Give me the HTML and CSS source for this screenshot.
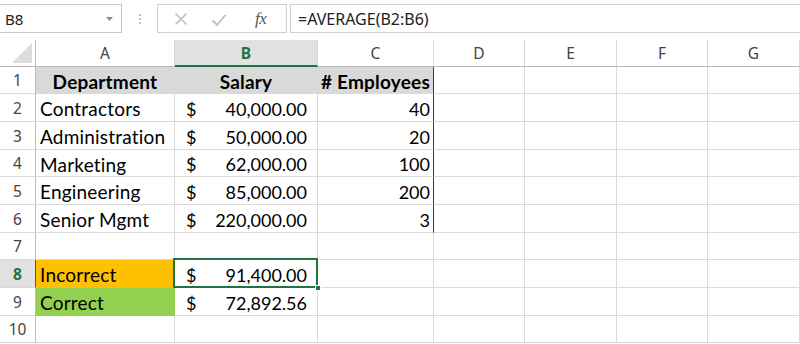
FILE: index.html
```html
<!DOCTYPE html>
<html>
<head>
<meta charset="utf-8">
<link rel="stylesheet" href="styles.css">
</head>
<body>
<div class="fbar">
  <div class="namebox"><span>B8</span><svg class="dd" width="7" height="4" viewBox="0 0 7 4"><path d="M0 0H7L3.5 4Z" fill="#8a8a8a"/></svg></div>
  <div class="grip"><i></i><i></i><i></i></div>
  <div class="btns">
    <svg class="ic" width="14" height="14" viewBox="0 0 14 14"><path d="M1.5 1.5L12.5 12.5M12.5 1.5L1.5 12.5" stroke="#bdbdbd" stroke-width="1.6" fill="none"/></svg>
    <svg class="ic" width="16" height="14" viewBox="0 0 16 14"><path d="M1.5 7.5L6 12L14.5 2" stroke="#bdbdbd" stroke-width="1.8" fill="none"/></svg>
    <span class="fx">fx</span>
  </div>
  <div class="formula">=AVERAGE(B2:B6)</div>
</div>
<div class="sheet">
  <div class="row r27 hdr">
    <div class="c rh corner"><svg width="20" height="20" viewBox="0 0 20 20"><path d="M20 0V20H0Z" fill="#dcdcdc"/></svg></div>
    <div class="c ch">A</div>
    <div class="c ch sel">B</div>
    <div class="c ch">C</div>
    <div class="c ch">D</div>
    <div class="c ch">E</div>
    <div class="c ch">F</div>
    <div class="c ch">G</div>
  </div>
  <div class="row r27">
    <div class="c rh">1</div>
    <div class="c gray b ctr t">Department</div>
    <div class="c gray b ctr t">Salary</div>
    <div class="c gray b ctr edge t">#&nbsp;Employees</div>
    <div class="c"></div><div class="c"></div><div class="c"></div><div class="c"></div>
  </div>
  <div class="row r28">
    <div class="c rh">2</div>
    <div class="c l t">Contractors</div>
    <div class="c acc"><span>$</span><span>40,000.00</span></div>
    <div class="c r edge">40</div>
    <div class="c"></div><div class="c"></div><div class="c"></div><div class="c"></div>
  </div>
  <div class="row r28">
    <div class="c rh">3</div>
    <div class="c l t">Administration</div>
    <div class="c acc"><span>$</span><span>50,000.00</span></div>
    <div class="c r edge">20</div>
    <div class="c"></div><div class="c"></div><div class="c"></div><div class="c"></div>
  </div>
  <div class="row r27">
    <div class="c rh">4</div>
    <div class="c l t">Marketing</div>
    <div class="c acc"><span>$</span><span>62,000.00</span></div>
    <div class="c r edge">100</div>
    <div class="c"></div><div class="c"></div><div class="c"></div><div class="c"></div>
  </div>
  <div class="row r28">
    <div class="c rh">5</div>
    <div class="c l t">Engineering</div>
    <div class="c acc"><span>$</span><span>85,000.00</span></div>
    <div class="c r edge">200</div>
    <div class="c"></div><div class="c"></div><div class="c"></div><div class="c"></div>
  </div>
  <div class="row r28">
    <div class="c rh">6</div>
    <div class="c l t">Senior Mgmt</div>
    <div class="c acc"><span>$</span><span>220,000.00</span></div>
    <div class="c r edge">3</div>
    <div class="c"></div><div class="c"></div><div class="c"></div><div class="c"></div>
  </div>
  <div class="row r27">
    <div class="c rh">7</div>
    <div class="c"></div><div class="c"></div><div class="c"></div>
    <div class="c"></div><div class="c"></div><div class="c"></div><div class="c"></div>
  </div>
  <div class="row r28">
    <div class="c rh rsel">8</div>
    <div class="c l t orange">Incorrect</div>
    <div class="c acc active"><span>$</span><span>91,400.00</span><i class="handle"></i></div>
    <div class="c"></div>
    <div class="c"></div><div class="c"></div><div class="c"></div><div class="c"></div>
  </div>
  <div class="row r28">
    <div class="c rh">9</div>
    <div class="c l t green">Correct</div>
    <div class="c acc"><span>$</span><span>72,892.56</span></div>
    <div class="c"></div>
    <div class="c"></div><div class="c"></div><div class="c"></div><div class="c"></div>
  </div>
  <div class="row r27">
    <div class="c rh">10</div>
    <div class="c"></div><div class="c"></div><div class="c"></div>
    <div class="c"></div><div class="c"></div><div class="c"></div><div class="c"></div>
  </div>
</div>
</body>
</html>
```
FILE: styles.css
```css
* { box-sizing: border-box; }
html, body { margin: 0; padding: 0; background: #fff; }
body { width: 800px; height: 344px; overflow: hidden; font-family: "Lato", "Liberation Sans", sans-serif; color: #000; }

.fbar { height: 40px; display: flex; align-items: flex-start; padding-top: 4px; font-family: "Noto Sans", "Open Sans", sans-serif; }
.namebox { width: 122px; height: 29px; border: 1px solid #c6c6c6; border-left: none; display: flex; align-items: center; justify-content: space-between; padding: 0 8px 0 5px; font-size: 15px; color: #222; }
.namebox .dd { margin-top: 1px; }
.grip { width: 35px; height: 29px; display: flex; flex-direction: column; align-items: center; justify-content: center; gap: 2px; }
.grip i { width: 2px; height: 2px; background: #c4c4c4; display: block; }
.btns { width: 130px; height: 29px; border: 1px solid #d0d0d0; display: flex; align-items: center; padding-left: 16px; }
.btns .ic:nth-child(2) { margin-left: 23px; margin-top: 2px; }
.fx { margin-left: 28px; font-family: "Liberation Serif", serif; font-style: italic; font-size: 17px; color: #555; letter-spacing: -0.5px; }
.formula { flex: 1; height: 29px; margin-left: 3px; border: 1px solid #d0d0d0; border-right: none; font-size: 16px; color: #222; display: flex; align-items: center; padding-left: 7px; }

.sheet { display: flex; flex-direction: column; }
.row { display: grid; grid-template-columns: 36px 139px 143px 116px 91px 92px 91px 92px; }
.r27 { height: 27px; }
.r28 { height: 28px; }
.c { border-right: 1px solid #dadada; border-bottom: 1px solid #dadada; font-size: 18px; display: flex; align-items: center; white-space: nowrap; padding-top: 2px; }
.c.t { font-size: 19px; letter-spacing: 0.2px; }
.hdr .c { border-bottom-color: #b7b7b7; }
.ch { justify-content: center; font-family: "Noto Sans", "Open Sans", sans-serif; font-size: 15.5px; color: #444; border-right-color: #d8d8d8; padding-top: 0; }
.ch.sel { background: #e1e1e1; color: #217346; font-weight: bold; border-bottom: 2px solid #217346; }
.rh { justify-content: center; font-family: "Noto Sans", "Open Sans", sans-serif; font-size: 15.5px; color: #444; border-right-color: #bdbdbd; padding-top: 0; }
.rh.rsel { background: #e1e1e1; color: #217346; font-weight: bold; border-right: 1px solid #217346; }
.corner { align-items: flex-end; justify-content: flex-end; padding: 0 3px 3px 0; }
.corner svg { display: block; }

.l { padding-left: 4px; }
.r { justify-content: flex-end; padding-right: 3px; }
.b { font-weight: bold; }
.ctr { justify-content: center; }
.gray { background: #d9d9d9; border-right-color: #d9d9d9; border-bottom-color: #d9d9d9; }
.edge { border-right: 1px solid #3a3a3a; }
.acc { justify-content: space-between; padding: 2px 10px 0 11px; }
.orange { background: #ffc000; border-color: #ffc000; }
.green { background: #92d050; border-color: #92d050; }
.active { position: relative; }
.active::after { content: ""; position: absolute; left: -2px; top: -2px; right: -1px; bottom: -1px; border: 2px solid #217346; }
.handle { position: absolute; right: -4px; bottom: -4px; width: 6px; height: 6px; background: #217346; border: 1px solid #fff; z-index: 2; }
```
